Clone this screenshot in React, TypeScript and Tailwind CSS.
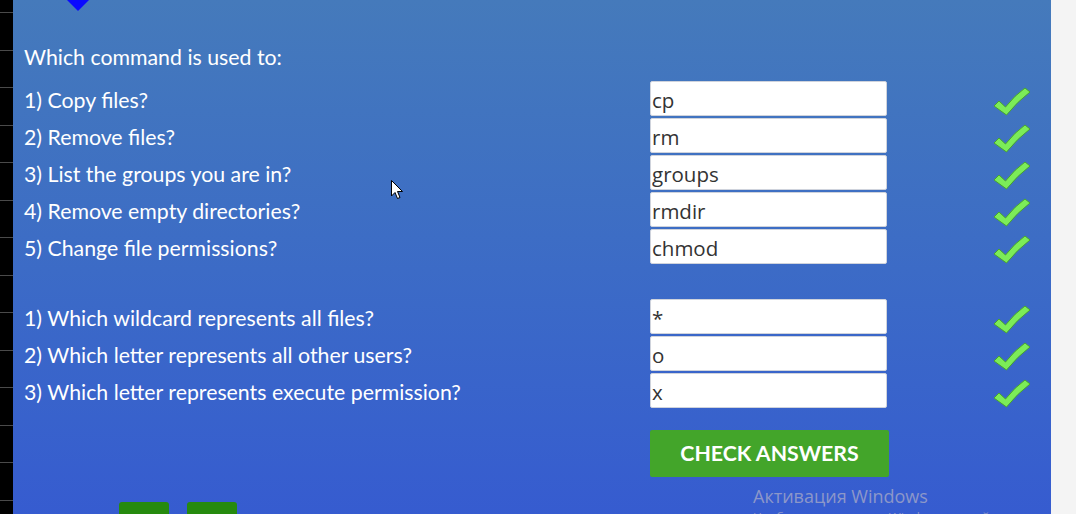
const first = [
  { q: '1) Copy files?', a: 'cp' },
  { q: '2) Remove files?', a: 'rm' },
  { q: '3) List the groups you are in?', a: 'groups' },
  { q: '4) Remove empty directories?', a: 'rmdir' },
  { q: '5) Change file permissions?', a: 'chmod' },
];

const second = [
  { q: '1) Which wildcard represents all files?', a: '*' },
  { q: '2) Which letter represents all other users?', a: 'o' },
  { q: '3) Which letter represents execute permission?', a: 'x' },
];

function Tick() {
  return (
    <svg width="38" height="29" viewBox="0 0 38 29" className="block">
      <path
        d="M1 19 L6 14 L12.5 20 Q22 8 32 1 L37 5 Q25 14 13.5 28 Z"
        fill="#7cec58"
        stroke="#48a52c"
        strokeWidth="1"
        strokeLinejoin="round"
      />
    </svg>
  );
}

function Row({ q, a }: { q: string; a: string }) {
  return (
    <div className="flex h-[37px] items-center">
      <div className="w-[626px] pt-[4px] text-[21.3px] text-white">{q}</div>
      <input
        readOnly
        value={a}
        className="h-[35px] w-[237px] rounded-[2px] border border-[#cfd3dc] bg-white px-[1px] pt-[2px] text-[20.5px] text-[#333] outline-none [font-family:'Open_Sans',sans-serif]"
      />
      <div className="ml-[106px] mt-[5px]">
        <Tick />
      </div>
    </div>
  );
}

export default function App() {
  return (
    <div className="relative flex h-[514px] w-[1076px] overflow-hidden bg-[#f4f4f4] [font-family:Lato,sans-serif]">
      {/* left dark strip */}
      <div className="flex h-full w-[13px] flex-col bg-black pt-[12px]">
        {Array.from({ length: 14 }).map((_, i) => (
          <div key={i} className="h-[37.5px] shrink-0 border-t border-[#4a4a4a]" />
        ))}
      </div>

      <div className="flex w-[1038px] flex-col">
        <div className="h-[4px] bg-black" />
        <div className="relative flex-1 bg-gradient-to-b from-[#457abb] to-[#365bd0] pl-[11px] pt-[43px]">
          {/* marker triangle */}
          <div className="absolute left-[54px] top-0 h-0 w-0 border-x-[11px] border-t-[11px] border-x-transparent border-t-[#0a0aff]" />

          <div className="flex h-[37px] items-center pb-[8px] text-[21.3px] text-white">Which command is used to:</div>
          {first.map((r) => (
            <Row key={r.q} {...r} />
          ))}
          <div className="h-[33px]" />
          {second.map((r) => (
            <Row key={r.q} {...r} />
          ))}

          <div className="mt-[21px] pl-[626px]">
            <button className="h-[47px] w-[239px] rounded-[2px] bg-[#43a52a] text-[21.3px] font-bold text-white">
              CHECK ANSWERS
            </button>
          </div>

          <div className="mt-[25px] flex gap-[18px] pl-[95px]">
            <div className="h-[20px] w-[50px] rounded-t-[3px] bg-[#268a0e]" />
            <div className="h-[20px] w-[50px] rounded-t-[3px] bg-[#268a0e]" />
          </div>
        </div>
      </div>

      {/* windows activation watermark */}
      <div className="pointer-events-none absolute left-[753px] top-[484px] text-[#8c97c9] [font-family:'Open_Sans',sans-serif]">
        <div className="text-[18px] leading-[24px]">Активация Windows</div>
        <div className="text-[13px] leading-[18px]">Чтобы активировать Windows, перейдите в раздел</div>
      </div>

      {/* mouse cursor */}
      <svg className="absolute left-[391px] top-[180px]" width="13" height="20" viewBox="0 0 13 20">
        <path d="M0.5 0.5 L0.5 16 L4 12.5 L6.5 18.5 L9 17.5 L6.5 11.5 L11.5 11.5 Z" fill="#fff" stroke="#000" strokeWidth="1" />
      </svg>
    </div>
  );
}
